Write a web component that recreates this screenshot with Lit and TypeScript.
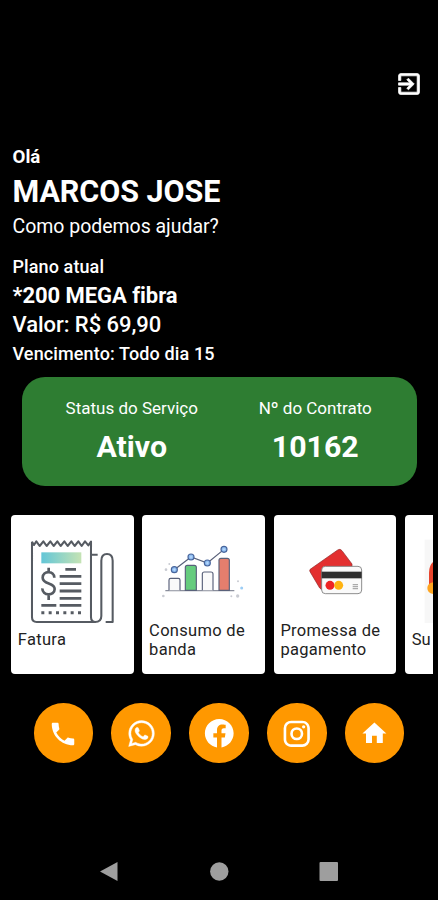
import { LitElement, html, css, svg } from "lit";
import { customElement } from "lit/decorators.js";

const invoiceArt = svg`
  <g fill="none" stroke="#565b62" stroke-width="6.2" stroke-linejoin="round">
    <path d="M81 101V328Q81 342 95 342H270Q289 342 289 324V158Q289 138 306 138Q323 138 323 158V342H302"/>
    <path d="M81 101L87 111L94 100L104 114L115 100L125 114L136 100L146 114L157 100L167 114L178 100L188 114L199 100L209 114L220 100L230 114L240 100L250 112L258 101V328Q258 342 272 342"/>
    <path d="M260 140H278"/>
  </g>
  <rect x="109" y="133" width="120" height="33" fill="url(#strip)"/>
  <g stroke="#565b62" stroke-width="8.500" fill="none">
    <path d="M181 184H213M164 205H229M164 227H229M164 249H229M164 271H229M164 292H229M109 292H154"/>
    <path d="M109 314H229" stroke-width="9" stroke-dasharray="9 13"/>
    <path d="M148 209C148 186 113 188 113 209C113 231 149 222 149 243C149 265 111 264 112 241M131 179V193M131 259V276" stroke-width="8"/>
  </g>
  <defs><linearGradient id="strip"><stop stop-color="#63c6d7"/><stop offset="1" stop-color="#c5e3b4"/></linearGradient></defs>`;

const usageArt = svg`
  <g stroke="#59617a" stroke-width="3.5">
    <path d="M84 248H291" stroke="#8b8f9d" stroke-width="4"/>
    <path d="M95 247V216Q95 211 100 211H123Q128 211 128 216V247" fill="#fafafa"/>
    <path d="M144 247V178Q144 172 150 172H171Q177 172 177 178V247Z" fill="#66cc7e"/>
    <path d="M195 247V198Q195 192 201 192H221Q227 192 227 198V247" fill="#fafafa"/>
    <path d="M245 247V157Q245 151 251 151H270Q276 151 276 157V247Z" fill="#e57e6d"/>
    <path d="M111 185L161 147L210 165L260 124" fill="none"/>
    <g fill="#8dbcf0" stroke="#48659c"><circle cx="111" cy="185" r="9"/><circle cx="161" cy="147" r="9"/><circle cx="210" cy="165" r="9"/><circle cx="260" cy="124" r="9"/></g>
    <path d="M107 185H115M111 181V189M157 147H165M161 143V151M206 165H214M210 161V169M256 124H264M260 120V128" stroke="#c9e2ff" stroke-width="2"/>
  </g>
  <circle cx="313" cy="240" r="4.5" fill="#9bcdf5"/>
  <g fill="#c9cbd2"><circle cx="86" cy="185" r="4"/><circle cx="96" cy="168" r="3"/><circle cx="78" cy="264" r="4"/><circle cx="302" cy="220" r="3"/><circle cx="301" cy="264" r="5"/><circle cx="282" cy="265" r="3"/></g>`;

const cardsArt = svg`
  <path d="M130 180L207 126Q214 121 220 128L250 168L250 210L163 243Q157 246 153 240L124 191Q120 185 130 180Z" fill="#e33030" stroke="#8f2a2a" stroke-width="2"/>
  <rect x="159" y="175" width="120" height="82" rx="11" fill="#fafafa" stroke="#777" stroke-width="2.5"/>
  <rect x="159" y="191" width="120" height="20" fill="#303030"/>
  <circle cx="184" cy="232" r="13.5" fill="#ee2424"/><circle cx="210" cy="232" r="13.5" fill="#ffb311"/>
  <path d="M252 230H268M252 236H268M252 242H268" stroke="#aaa" stroke-width="3.5"/>`;

const supportArt = svg`
  <rect x="470" y="95" width="100" height="250" fill="#f7f7f7"/>
  <path d="M498 160Q483 170 483 195V232H500Z" fill="#e8452d"/>
  <path d="M500 222Q478 224 478 240Q478 257 500 259Z" fill="#ffa51f"/>`;

const services = [
  { label: "Fatura", art: invoiceArt, box: "18 21 367.5 330" },
  { label: "Consumo de banda", art: usageArt, box: "14 21 367.5 330" },
  { label: "Promessa de pagamento", art: cardsArt, box: "16 21 367.5 330" },
  { label: "Su", art: supportArt, box: "411 21 367.5 330" },
];

const contacts = [
  svg`<path d="M6.62 10.79c1.44 2.83 3.76 5.14 6.59 6.59l2.2-2.2c.27-.27.67-.36 1.02-.24 1.12.37 2.33.57 3.57.57.55 0 1 .45 1 1V20c0 .55-.45 1-1 1-9.39 0-17-7.61-17-17 0-.55.45-1 1-1h3.5c.55 0 1 .45 1 1 0 1.25.2 2.45.57 3.57.11.35.03.74-.25 1.02l-2.2 2.2z"/>`,
  svg`<path d="M12.04 2C6.58 2 2.13 6.45 2.13 11.91c0 1.75.46 3.45 1.32 4.95L2.05 22l5.25-1.38a9.9 9.9 0 0 0 4.74 1.21c5.46 0 9.91-4.45 9.91-9.91 0-2.65-1.03-5.14-2.9-7.01A9.82 9.82 0 0 0 12.04 2m.01 1.67c2.2 0 4.26.86 5.82 2.42a8.2 8.2 0 0 1 2.41 5.83c0 4.54-3.7 8.23-8.24 8.23-1.48 0-2.93-.39-4.19-1.15l-.3-.17-3.12.82.83-3.04-.2-.32a8.2 8.2 0 0 1-1.26-4.38c.01-4.54 3.7-8.24 8.25-8.24M8.53 7.33c-.16 0-.43.06-.66.31-.22.25-.87.86-.87 2.07 0 1.22.89 2.39 1 2.56.14.17 1.76 2.67 4.25 3.73.59.27 1.05.42 1.41.53.59.19 1.13.16 1.56.1.48-.07 1.46-.6 1.67-1.18s.21-1.07.15-1.18c-.07-.1-.23-.16-.48-.27-.25-.14-1.47-.74-1.69-.82-.23-.08-.37-.12-.56.12-.16.25-.64.81-.78.97-.15.17-.29.19-.53.07-.26-.13-1.06-.39-2-1.23-.74-.66-1.23-1.47-1.38-1.72-.12-.24-.01-.39.11-.5.11-.11.27-.29.37-.44.13-.14.17-.25.25-.41.08-.17.04-.31-.02-.43-.06-.11-.56-1.35-.77-1.84-.2-.48-.4-.42-.56-.43-.14 0-.3-.01-.47-.01" stroke="#fff" stroke-width=".3"/>`,
  svg`<path d="M22 12c0-5.52-4.48-10-10-10S2 6.480 2 12c0 4.990 3.660 9.130 8.440 9.880v-6.990H7.900V12h2.540V9.800c0-2.510 1.490-3.890 3.780-3.890 1.090 0 2.240.2 2.240.2v2.460H15.190c-1.240 0-1.630.77-1.630 1.560V12h2.780l-.45 2.890h-2.330v6.990C18.340 21.130 22 16.990 22 12z"/>`,
  svg`<path d="M7.8 2h8.4C19.4 2 22 4.6 22 7.8v8.4a5.8 5.8 0 0 1-5.8 5.8H7.8C4.6 22 2 19.4 2 16.2V7.8A5.8 5.8 0 0 1 7.8 2m-.2 2A3.6 3.6 0 0 0 4 7.6v8.8C4 18.39 5.61 20 7.6 20h8.8a3.6 3.6 0 0 0 3.6-3.6V7.6C20 5.61 18.39 4 16.4 4H7.6m9.65 1.5a1.25 1.25 0 1 1 0 2.5 1.25 1.25 0 0 1 0-2.5M12 7a5 5 0 1 1 0 10 5 5 0 0 1 0-10m0 2a3 3 0 1 0 0 6 3 3 0 0 0 0-6z"/>`,
  svg`<path d="M10 20v-6h4v6h5v-8h3L12 3 2 12h3v8z"/>`,
];
const contactSizes = [30, 31, 34.5, 31.5, 28.8];

@customElement("app-root")
export class AppRoot extends LitElement {
  static styles = css`
    :host {
      display: flex;
      flex-direction: column;
      height: 900px;
      background: #000;
      color: #fff;
      font-family: Roboto, sans-serif;
      overflow: hidden;
    }
    svg { display: block; flex: none; }
    .top { display: flex; justify-content: flex-end; padding: 70px 15px 0 0; height: 76px; }
    .exit { width: 28px; height: 28px; fill: #fff; }
    .intro { padding-left: 12.5px; white-space: nowrap; }
    .intro div { font-weight: 700; }
    .intro .hello { font-size: 18.7px; line-height: 22px; }
    .intro .name { font-size: 30.5px; line-height: 47px; letter-spacing: -0.05px; }
    .intro .ask { font-size: 19.5px; line-height: 24px; font-weight: 400; margin-bottom: 17px; letter-spacing: -0.03px; }
    .intro .plan { font-size: 18px; line-height: 22px; font-weight: 500; letter-spacing: 0.1px; }
    .intro .speed { font-size: 22px; line-height: 35px; letter-spacing: -0.05px; }
    .intro .price { font-size: 22px; line-height: 23px; font-weight: 500; letter-spacing: -0.05px; }
    .intro .due { font-size: 18px; line-height: 36px; font-weight: 500; letter-spacing: 0.13px; }
    .status {
      margin: 5px 21px 0 22px;
      height: 109px;
      box-sizing: border-box;
      padding: 19px 10px 0 18px;
      border-radius: 23px;
      background: #2e7d32;
      display: grid;
      grid-template-columns: 1fr 1fr;
      text-align: center;
      white-space: nowrap;
    }
    .caption { font-size: 17px; line-height: 24px; }
    .value { font-size: 30.3px; line-height: 54px; font-weight: 700; }
    .services {
      margin: 29px 5.5px 0 11px;
      display: flex;
      gap: 8.8px;
      overflow: hidden;
    }
    .service {
      flex: none;
      width: 122.5px;
      height: 159px;
      border-radius: 4px;
      background: #fff;
      color: #222;
      overflow: hidden;
    }
    .art { width: 122.5px; height: 110px; margin-bottom: -5px; }
    .label {
      height: 40px;
      padding: 0 0 0 6.8px;
      display: flex;
      align-items: center;
      font-size: 16.5px;
      line-height: 19.5px;
      letter-spacing: 0.3px;
    }
    .service:last-child .label { letter-spacing: 0; }
    .contacts { display: flex; justify-content: center; gap: 18.3px; margin-top: 29px; }
    .contact {
      width: 59.5px;
      height: 59.5px;
      border-radius: 50%;
      background: #ff9800;
      fill: #fff;
      display: flex;
      align-items: center;
      justify-content: center;
      box-sizing: border-box;
      padding-top: 1.5px;
    }
    .nav { margin-top: auto; height: 57px; display: flex; justify-content: space-between; align-items: center; padding: 0 99px; fill: #9e9e9e; }
  `;

  render() {
    return html`
      <div class="top">
        <svg class="exit" viewBox="0 0 24 24"><path stroke="#fff" stroke-width=".6" d="M10.09 15.59L11.5 17l5-5-5-5-1.41 1.41L12.67 11H3v2h9.67l-2.58 2.59zM19 3H5c-1.11 0-2 .9-2 2v4h2V5h14v14H5v-4H3v4c0 1.1.89 2 2 2h14c1.1 0 2-.9 2-2V5c0-1.1-.9-2-2-2z"/></svg>
      </div>
      <div class="intro">
        <div class="hello">Olá</div>
        <div class="name">MARCOS JOSE</div>
        <div class="ask">Como podemos ajudar?</div>
        <div class="plan">Plano atual</div>
        <div class="speed">*200 MEGA fibra</div>
        <div class="price">Valor: R$ 69,90</div>
        <div class="due">Vencimento: Todo dia 15</div>
      </div>
      <div class="status">
        <div><div class="caption">Status do Serviço</div><div class="value">Ativo</div></div>
        <div><div class="caption">Nº do Contrato</div><div class="value">10162</div></div>
      </div>
      <div class="services">
        ${services.map((s) => html`<div class="service">
          <svg class="art" viewBox=${s.box}>${s.art}</svg>
          <div class="label">${s.label}</div>
        </div>`)}
      </div>
      <div class="contacts">
        ${contacts.map((icon, i) => html`<div class="contact"><svg viewBox="0 0 24 24" width=${contactSizes[i]} height=${contactSizes[i]}>${icon}</svg></div>`)}
      </div>
      <div class="nav">
        <svg width="20" height="20"><path d="M1 9.500L18.500 0V19Z"/></svg>
        <svg width="20" height="20"><circle cx="10.300" cy="9.500" r="9.200"/></svg>
        <svg width="20" height="20"><rect x=".5" y="0" width="18.500" height="19" rx="1"/></svg>
      </div>
    `;
  }
}
